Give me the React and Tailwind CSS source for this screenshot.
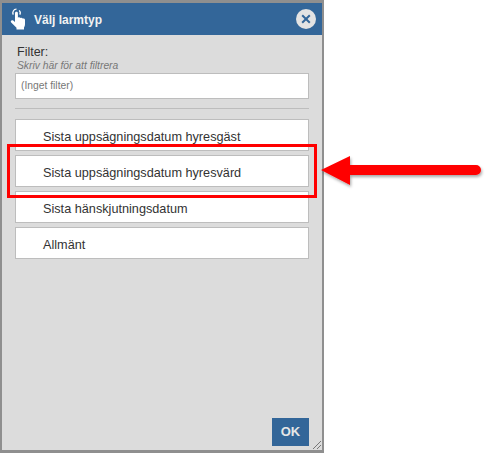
const font = { fontFamily: '"Liberation Sans", Arial, sans-serif' };

function Hand() {
  return (
    <svg width="17" height="22" viewBox="0 0 17 22" className="block">
      <path d="M6.5 1.2a3.6 3.6 0 0 0-3.2 5.4" fill="none" stroke="#fff" strokeWidth="1.3" />
      <path d="M9.8 6.6a3.6 3.6 0 0 0-.6-4.2" fill="none" stroke="#fff" strokeWidth="1.3" />
      <path d="M5 5.2c0-1.9 2.9-1.9 2.9 0v4.6c.5-.7 2.1-.6 2.4.3.6-.6 2-.4 2.3.5.8-.4 2.4 0 2.4 1.3V16c0 1.500-.4 2.500-1 3.600V21.500H6.500v-1.700L1.200 14.600c-1.200-1.400.5-3.200 2-2.100L5 14Z" fill="#fff" />
    </svg>
  );
}

function Row({ children }) {
  return (
    <div className="h-8 shrink-0 flex items-center bg-white border border-[#bdbdbd] pl-[27px] pt-[5px] text-[12.7px] text-[#333]">
      {children}
    </div>
  );
}

export default function App() {
  return (
    <div className="relative w-[486px] h-[453px] bg-white overflow-hidden" style={font}>
      <div className="relative w-[324px] h-[453px] flex flex-col border-x-2 border-b-[3px] border-t-[3px] border-[#8f8f8f] bg-[#dcdcdc]">
        <div className="h-[32px] shrink-0 flex items-center bg-[#336699] pl-[8px] pr-[6px]">
          <Hand />
          <span className="ml-[7px] pt-[1px] text-[12px] font-bold text-[#f2f2f2]">Välj larmtyp</span>
          <span className="ml-auto w-[20px] h-[20px] rounded-full bg-[#e3e3e3] flex items-center justify-center">
            <svg width="10" height="10" viewBox="0 0 10 10">
              <path d="M1.200 1.200 8.800 8.800M8.800 1.200 1.200 8.800" stroke="#336699" strokeWidth="2" />
            </svg>
          </span>
        </div>
        <div className="flex-1 flex flex-col px-[13px] pt-[10px] pb-[4px]">
          <div className="pl-[2px] text-[12.5px] leading-[15px] text-[#333]">Filter:</div>
          <div className="pl-[2px] text-[10.3px] leading-[11px] italic text-[#777]">Skriv här för att filtrera</div>
          <div className="mt-[2px] h-[26px] shrink-0 flex items-center bg-white border border-[#bdbdbd] pl-[5px] text-[10.3px] text-[#777]">
            (Inget filter)
          </div>
          <div className="mt-[9px] border-t border-[#bdbdbd]" />
          <div className="mt-[10px] flex flex-col gap-[4px]">
            <Row>Sista uppsägningsdatum hyresgäst</Row>
            <Row>Sista uppsägningsdatum hyresvärd</Row>
            <Row>Sista hänskjutningsdatum</Row>
            <Row>Allmänt</Row>
          </div>
          <div className="mt-auto self-end w-[37px] h-[28px] flex items-center justify-center bg-[#336699] text-[13px] font-bold text-[#e6e6e6]">
            OK
          </div>
        </div>
        <svg width="10" height="10" viewBox="0 0 10 10" className="absolute right-0 bottom-0">
          <path d="M1 9 9 1M5 9 9 5" stroke="#777" strokeWidth="1" />
        </svg>
      </div>
      <div className="absolute left-[7px] top-[144px] w-[310px] h-[54px] border-[3px] border-[#f00]" />
      <svg width="170" height="60" viewBox="0 0 170 60" className="absolute left-[316px] top-[140px]">
        <defs>
          <filter id="s" x="-10%" y="-30%" width="120%" height="170%">
            <feDropShadow dx="1" dy="2" stdDeviation="1.500" floodColor="#000" floodOpacity="0.35" />
          </filter>
        </defs>
        <path d="M5 30 34 16V25H160a5 5 0 0 1 0 10H34V45Z" fill="#f00" filter="url(#s)" />
      </svg>
    </div>
  );
}
